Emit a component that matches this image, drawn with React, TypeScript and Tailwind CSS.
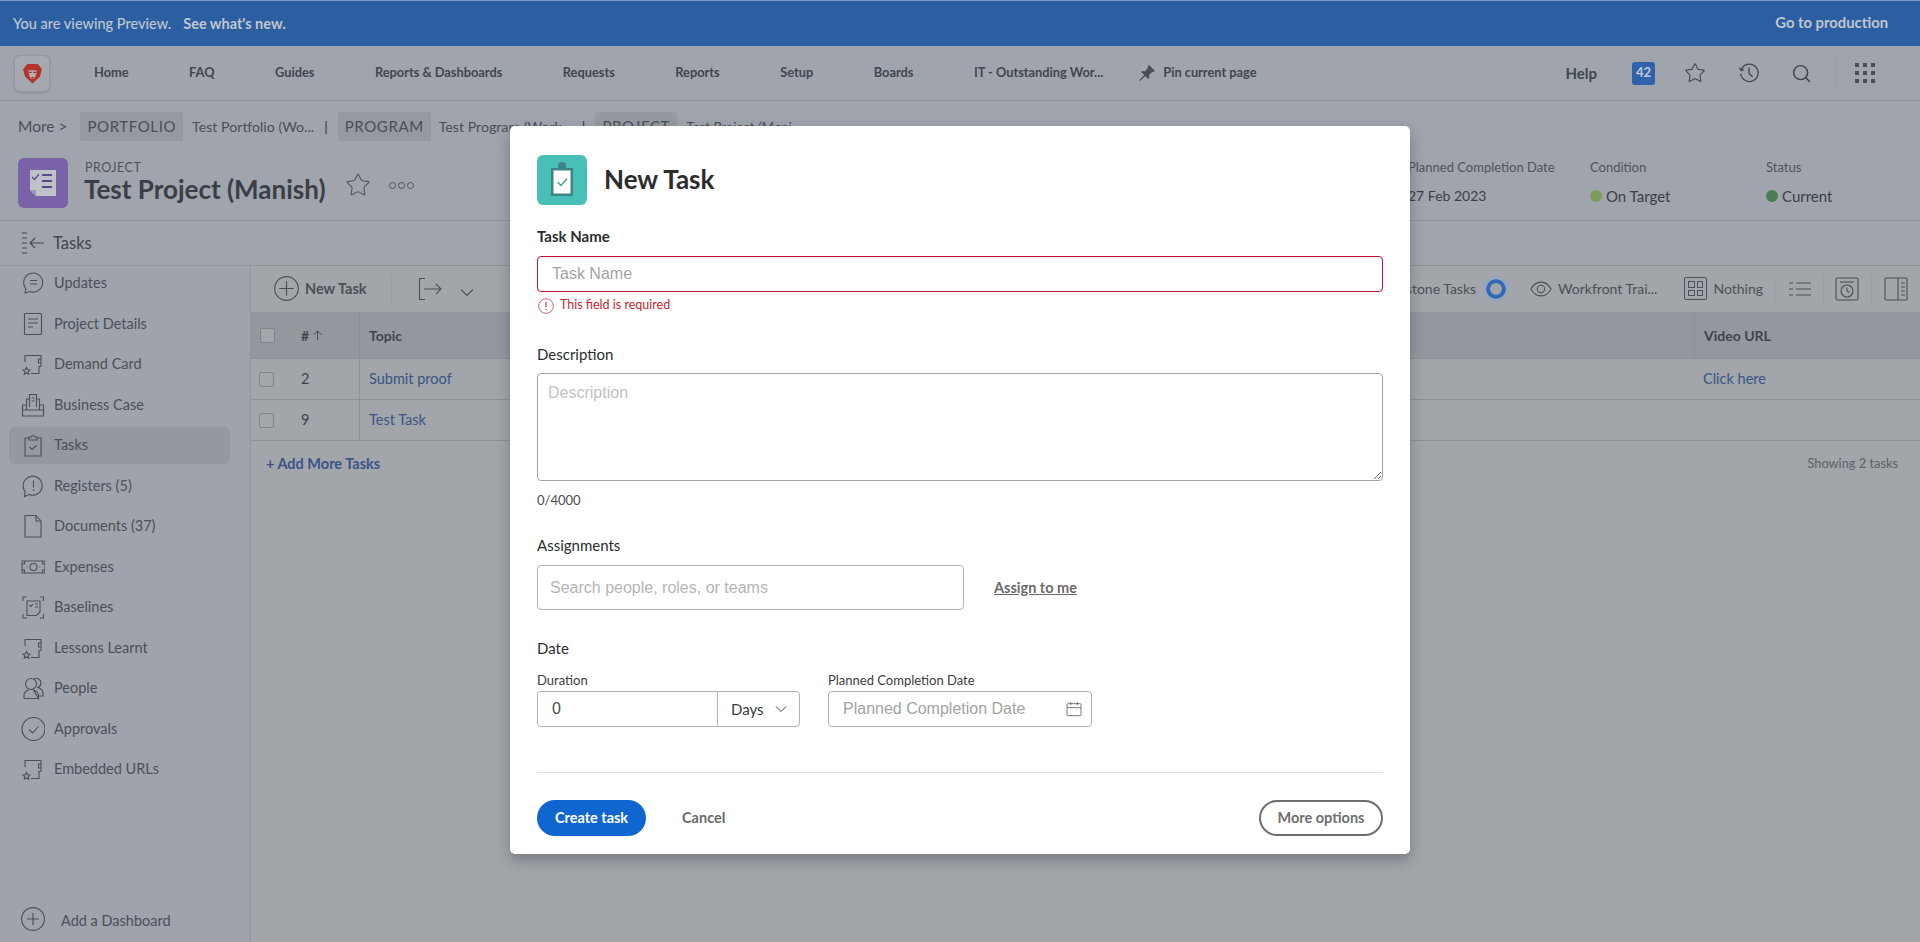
import React from 'react';
import { Search, Star } from 'lucide-react';

const font = 'font-["Lato","Open_Sans",sans-serif]';

function Ico({ className = 'w-6 h-6', children }: { className?: string; children: React.ReactNode }) {
  return (
    <svg viewBox="0 0 24 24" fill="none" stroke="currentColor" strokeWidth="1.1" className={className}>
      {children}
    </svg>
  );
}

const NoteStar = () => (
  <Ico>
    <path d="M4 10V3.500h16v11M20 7h-2.500v4H20M20 14.500h-2v7h-8" />
    <path d="M5.500 15.500l1.100 2.300 2.400.3-1.800 1.600.5 2.400-2.200-1.200-2.200 1.200.5-2.400L2 18.100l2.400-.3z" />
  </Ico>
);

const sideItems: { label: string; icon: React.ReactNode }[] = [
  {
    label: 'Updates',
    icon: (
      <Ico>
        <path d="M4 22l.8-4.500A9.500 9.500 0 1 1 9 20.500z" />
        <path d="M9 9.500h7M9 13h7" />
      </Ico>
    ),
  },
  {
    label: 'Project Details',
    icon: (
      <Ico>
        <rect x="3.500" y="1.500" width="17" height="21" rx="1" />
        <path d="M7 7h10M7 11h10M7 15h5" />
      </Ico>
    ),
  },
  { label: 'Demand Card', icon: <NoteStar /> },
  {
    label: 'Business Case',
    icon: (
      <Ico>
        <path d="M1.500 12h4v5h13v-5h4v11h-21zM1.500 17h21" />
        <path d="M5.500 12V6h3M18.500 12V6h-3M8.500 14V1.500h7V14M10.500 5h3M10.500 8h3" />
      </Ico>
    ),
  },
  {
    label: 'Tasks',
    icon: (
      <Ico>
        <path d="M8 5H4v18h16V5h-4M8 7V4h2.500a1.500 1.500 0 0 1 3 0H16v3z" />
        <path d="M8.500 14l2.500 2.500 4.500-4" />
      </Ico>
    ),
  },
  {
    label: 'Registers (5)',
    icon: (
      <Ico>
        <path d="M3.500 22.500l.6-5A9.500 9.500 0 1 1 8 20.500z" />
        <path d="M12.500 6.500v7M12.500 15.500v1.500" />
      </Ico>
    ),
  },
  {
    label: 'Documents (37)',
    icon: (
      <Ico>
        <path d="M4 1.500h11l5 5.500v16H4z" />
        <path d="M15 1.500V7h5" />
      </Ico>
    ),
  },
  {
    label: 'Expenses',
    icon: (
      <Ico>
        <rect x="1" y="6" width="23" height="12" rx="0.5" />
        <circle cx="12.500" cy="12" r="3.500" />
        <path d="M1 9h2.500V6M24 9h-2.500V6M1 15h2.500v3M24 15h-2.500v3M5.500 12h1M18.500 12h1" />
      </Ico>
    ),
  },
  {
    label: 'Baselines',
    icon: (
      <Ico>
        <path d="M2 6V2h3.500M19 2h3.500v4M2 19v4h4M19 23h3.500v-4" />
        <path d="M6 6h13v11l-3.500 3.500H6z" />
        <path d="M8.500 10l1.500 1.500 2-2.500M14 9h3M14 12h3" />
      </Ico>
    ),
  },
  { label: 'Lessons Learnt', icon: <NoteStar /> },
  {
    label: 'People',
    icon: (
      <Ico>
        <circle cx="10" cy="8" r="5.500" />
        <path d="M3 22.500v-3c0-3 2-4.500 4.500-5.500M12.500 14c3 1 5 2.500 5 5.500v3zM3 22.500h14.500" />
        <path d="M13 2.700A5 5 0 0 1 20 7a5 5 0 0 1-3 4.500c3 1 5 3 5 6v2.500h-4" />
      </Ico>
    ),
  },
  {
    label: 'Approvals',
    icon: (
      <Ico>
        <circle cx="12.500" cy="12" r="11.500" />
        <path d="M8 12.500l3.500 3.500 6-6.500" />
      </Ico>
    ),
  },
  { label: 'Embedded URLs', icon: <NoteStar /> },
];

const navItems = ['Home', 'FAQ', 'Guides', 'Reports & Dashboards', 'Requests', 'Reports', 'Setup', 'Boards', 'IT - Outstanding Wor...'];

function Banner() {
  return (
    <div className="h-[46px] shrink-0 bg-[#2c5fa2] border-t border-[#7d9cc4] flex items-center justify-between pl-[13px] pr-[32px] text-[14.500px] text-[#c0c6cf]">
      <div className="flex gap-[12px] font-medium">
        <span>You are viewing Preview.</span>
        <span className="font-bold">See what's new.</span>
      </div>
      <span className="font-bold text-[14.800px] -mt-0.5">Go to production</span>
    </div>
  );
}

function TopNav() {
  return (
    <div className="h-[55px] shrink-0 border-b border-[#8f939a] flex items-center pl-[14px] pr-[45px] text-[#41464e]">
      <div className="w-[36px] h-[37px] rounded-md bg-[#a5a8af] border border-[#94979e] shadow-sm flex items-center justify-center mr-[44px]">
        <svg viewBox="0 0 20 20" className="w-[21px] h-[21px]">
          <path d="M5 1h10l4 5-2 7-7 6.500L3 13 1 6z" fill="#b3332c" />
          <path d="M6 7h8l-.8 5-1.700 3h-3L6.800 12z" fill="#b9a9ab" />
          <path d="M7 9h2M11 9h2M9 14h2" stroke="#7d2a27" strokeWidth="1.200" />
        </svg>
      </div>
      <div className="flex items-center gap-[60.500px] text-[12.800px] font-bold">
        {navItems.map((n) => (
          <span key={n}>{n}</span>
        ))}
      </div>
      <div className="flex items-center gap-[6px] ml-[34px] text-[12.800px] font-bold">
        <svg viewBox="0 0 20 20" className="w-[20px] h-[20px]" fill="#4a4f57">
          <path d="M12 2l6 6-1.500 1-1-.3-3.500 3.300.3 3-1 1-3-3-5.300 5-.8-.8 5-5.300-3-3 1-1 3 .3L11 4.500l-.3-1z" />
        </svg>
        <span>Pin current page</span>
      </div>
      <div className="ml-auto flex items-center">
        <span className="text-[15px] font-bold mr-[35px]">Help</span>
        <span className="w-[23px] h-[23px] rounded-[3px] bg-[#2f62ab] text-[#c3cad6] text-[13px] font-bold flex items-center justify-center mr-[29px]">42</span>
        <Star className="w-[22px] h-[22px] mr-[32px]" strokeWidth={1.200} />
        <Ico className="w-[22px] h-[22px] mr-[31px]">
          <path d="M3.500 8.500A9.500 9.500 0 1 1 3 13M1.500 6.500l2 3 3-1.500" strokeWidth="1.400" />
          <path d="M12 6v6.500l4 3.500" strokeWidth="1.400" />
        </Ico>
        <Search className="w-[21px] h-[21px] mr-[24px]" strokeWidth={1.700} />
        <div className="w-px h-[36px] bg-[#979ba2] mr-[18px]" />
        <div className="grid grid-cols-3 gap-[4px]">
          {Array.from({ length: 9 }).map((_, i) => (
            <span key={i} className="w-[4px] h-[4px] bg-[#4a4f57]" />
          ))}
        </div>
      </div>
    </div>
  );
}

function Chip({ children }: { children: React.ReactNode }) {
  return <span className="h-[29px] px-[7px] rounded-[2px] bg-[#96999f] text-[15px] tracking-[0.6px] flex items-center">{children}</span>;
}

function Breadcrumbs() {
  return (
    <div className="h-[50px] shrink-0 flex items-center pl-[18px] text-[14.200px] text-[#4a4f57] pt-[1px]">
      <span className="mr-[13px] text-[15.500px]">More &gt;</span>
      <Chip>PORTFOLIO</Chip>
      <span className="ml-[9px]">Test Portfolio (Wo...</span>
      <span className="mx-[10px] text-[#2e3238]">|</span>
      <Chip>PROGRAM</Chip>
      <span className="ml-[8px]">Test Program (Work...</span>
      <span className="mx-[10px] text-[#2e3238]">|</span>
      <Chip>PROJECT</Chip>
      <span className="ml-[9px] italic">Test Project (Mani...</span>
    </div>
  );
}

function Stat({ label, children, className }: { label: string; children: React.ReactNode; className: string }) {
  return (
    <div className={className}>
      <div className="text-[13px] leading-[18px] text-[#4f545c] mb-[10px]">{label}</div>
      <div className="text-[15px] leading-[20px] text-[#3a3f47] flex items-center gap-[4px]">{children}</div>
    </div>
  );
}

function ProjectHeader() {
  return (
    <div className="h-[70px] shrink-0 border-b border-[#8f939a] flex items-start pl-[18px] text-[#3a3f47]">
      <div className="w-[50px] h-[50px] mt-[7px] rounded-md bg-[#7a62a8] flex items-center justify-center">
        <svg viewBox="0 0 26 26" className="w-[26px] h-[26px]">
          <path d="M0 0h26v26H6l-6-6z" fill="#bfc1c9" />
          <path d="M0 20h6v6z" fill="#9e97b5" />
          <path d="M2 7l2.500 2.500L9 4" fill="none" stroke="#5c4a86" strokeWidth="1.200" />
          <path d="M12 5h10M12 11h10M12 17h10" stroke="#5c4a86" strokeWidth="2.200" />
        </svg>
      </div>
      <div className="ml-[17px] mt-[9px]">
        <div className="text-[12.500px] leading-[15px] tracking-[0.5px] text-[#4f545c]">PROJECT</div>
        <div className="text-[26px] leading-[34px] font-bold -ml-px -mt-[3px]">Test Project (Manish)</div>
      </div>
      <Star className="w-[26px] h-[26px] ml-[19px] mt-[21px] text-[#4f545c]" strokeWidth={1} />
      <div className="flex gap-[2px] ml-[18px] mt-[31px]">
        {[0, 1, 2].map((i) => (
          <span key={i} className="w-[7px] h-[7px] rounded-full border border-[#4f545c]" />
        ))}
      </div>
      <div className="ml-auto flex mt-[7px]">
        <Stat label="Planned Completion Date" className="w-[182px]">
          <span className="text-[14px]">27 Feb 2023</span>
        </Stat>
        <Stat label="Condition" className="w-[176px]">
          <span className="w-[12px] h-[12px] rounded-full bg-[#7b9c5c]" /> On Target
        </Stat>
        <Stat label="Status" className="w-[154px]">
          <span className="w-[12px] h-[12px] rounded-full bg-[#487d55]" /> Current
        </Stat>
      </div>
    </div>
  );
}

function Sidebar() {
  return (
    <aside className="w-[251px] shrink-0 border-r border-[#92969d] bg-[#9fa3ac] flex flex-col text-[#4b5058] relative">
      <div className="flex-1 pl-[9px] pr-[20px] -mt-[3px]">
        {sideItems.map((it) => (
          <div key={it.label} className="h-[40.500px] py-[2px]">
            <div className={`h-full flex items-center rounded-md pl-[12px] text-[14.500px] ${it.label === 'Tasks' ? 'bg-[#94989f]' : ''}`}>
              <span className="w-[33px] shrink-0 text-[#4b5058]">{it.icon}</span>
              <span>{it.label}</span>
            </div>
          </div>
        ))}
      </div>
      <div className="flex items-center pl-[21px] pb-[10px] text-[14.500px]">
        <Ico className="w-[24px] h-[24px] mr-[16px]">
          <circle cx="12" cy="12" r="11.400" />
          <path d="M12 6v12M6 12h12" />
        </Ico>
        <span className="mt-[4px]">Add a Dashboard</span>
      </div>
    </aside>
  );
}

function Toolbar() {
  return (
    <div className="h-[47px] shrink-0 flex items-center pl-[23px] pr-[12px] text-[#4b5058] text-[14px] -mt-px">
      <Ico className="w-[25px] h-[25px] mr-[6px]">
        <circle cx="12" cy="12" r="11.400" />
        <path d="M12 5v14M5 12h14" />
      </Ico>
      <span className="font-bold text-[14.500px]">New Task</span>
      <div className="w-px h-[28px] bg-[#979ba2] ml-[24px] mr-[25px]" />
      <Ico className="w-[26px] h-[24px]">
        <path d="M7 1.500H1.500v21H7M6 12h17M18 7l5 5-5 5" />
      </Ico>
      <Ico className="w-[14px] h-[14px] ml-[17px] mt-[6px]">
        <path d="M2 8l10 10L22 8" strokeWidth="2" />
      </Ico>
      <div className="ml-auto flex items-center">
        <span className="mr-[10px]">Milestone Tasks</span>
        <span className="w-[20px] h-[20px] rounded-full border-[4px] border-[#3069b5] outline-[3px] outline-[#97a6bd] mr-[24px] box-border" />
        <Ico className="w-[22px] h-[22px] mr-[6px]">
          <path d="M1 12C4 6.500 8 4.500 12 4.500S20 6.500 23 12c-3 5.500-7 7.500-11 7.500S4 17.500 1 12z" />
          <circle cx="12" cy="12" r="4" />
        </Ico>
        <span>Workfront Trai...</span>
        <div className="w-[23px] h-[23px] border border-[#4b5058] rounded-[2px] grid grid-cols-2 gap-[2px] p-[3px] ml-[27px] mr-[6px]">
          {[0, 1, 2, 3].map((i) => (
            <span key={i} className="border border-[#4b5058]" />
          ))}
        </div>
        <span>Nothing</span>
        <div className="w-px h-[28px] bg-[#979ba2] ml-[11px] mr-[13px]" />
        <Ico className="w-[24px] h-[24px]">
          <path d="M1 6h4M8 6h15M1 12h4M8 12h15M1 18h4M8 18h15" />
        </Ico>
        <div className="w-px h-[28px] bg-[#979ba2] mx-[11px]" />
        <Ico className="w-[24px] h-[24px]">
          <rect x="1" y="1" width="22" height="22" rx="1.500" />
          <path d="M5 5h14" />
          <circle cx="12" cy="14" r="6" />
          <path d="M12 10.500V14l2.500 1.500" />
        </Ico>
        <div className="w-px h-[28px] bg-[#979ba2] mx-[12px]" />
        <Ico className="w-[24px] h-[24px]">
          <rect x="1" y="1" width="22" height="22" rx="1" />
          <path d="M14 1v22M17 6h4M17 10h4M17 14h4M17 18h4" />
        </Ico>
      </div>
    </div>
  );
}

function Box() {
  return <span className="w-[15px] h-[15px] rounded-[2px] border border-[#80848b] bg-[#a3a6ab] block" />;
}

function Row({ num, title, url }: { num: string; title: string; url?: string }) {
  return (
    <div className="h-[41px] border-b border-[#8d9197] flex items-center text-[14.500px]">
      <span className="w-[50px] pl-[8px]"><Box /></span>
      <span className="w-[58px] text-[#3f444c]">{num}</span>
      <span className="h-full w-px bg-[#8d9197]" />
      <span className="ml-[9px] text-[#3a5488]">{title}</span>
      {url && <span className="ml-auto w-[226px] pl-[9px] text-[#3a5488]">{url}</span>}
      {!url && <span className="ml-auto w-[226px]" />}
    </div>
  );
}

function TaskTable() {
  return (
    <main className="flex-1 bg-[#a2a5a9] flex flex-col min-w-0">
      <Toolbar />
      <div className="h-[47px] shrink-0 bg-[#94989e] border-b border-[#8d9197] flex items-center text-[14px] font-bold text-[#3f444c]">
        <span className="w-[50px] pl-[9px]"><Box /></span>
        <span className="w-[58px] flex items-center gap-[3px]">
          # <svg viewBox="0 0 12 12" className="w-[11px] h-[11px]" fill="none" stroke="currentColor"><path d="M6 11V1M1.500 5.500L6 1l4.500 4.500" /></svg>
        </span>
        <span className="h-full w-px bg-[#8d9197]" />
        <span className="ml-[9px]">Topic</span>
        <span className="ml-auto w-[226px] h-full flex items-center pl-[9px] border-l border-[#8d9197]">Video URL</span>
      </div>
      <Row num="2" title="Submit proof" url="Click here" />
      <Row num="9" title="Test Task" />
      <div className="h-[46px] flex items-center justify-between pl-[15px] pr-[22px]">
        <span className="text-[14.500px] font-bold text-[#3a5488]">+ Add More Tasks</span>
        <span className="text-[12.800px] text-[#5d6168]">Showing 2 tasks</span>
      </div>
    </main>
  );
}

function Label({ children, className = '' }: { children: React.ReactNode; className?: string }) {
  return <div className={`text-[15px] leading-[20px] text-[#2c2c2c] ${className}`}>{children}</div>;
}

const inputCls = 'font-["Liberation_Sans",Arial,sans-serif] text-[16px] text-[#4b4b4b] outline-none bg-white';

function NewTaskModal() {
  return (
    <div className="absolute left-[510px] top-[126px] w-[900px] h-[728px] bg-white rounded-[5px] shadow-[0_6px_14px_rgba(40,45,60,0.35)] px-[27px] pt-[29px]">
      <div className="flex items-center h-[50px]">
        <div className="w-[50px] h-[50px] rounded-md bg-[#48c0b8] flex items-center justify-center">
          <svg viewBox="0 0 24 36" className="w-[24px] h-[36px]">
            <path d="M1 6h22v28H1z" fill="#3f8584" />
            <path d="M8 6V4a4 4 0 0 1 8 0v2h2v3H6V6z" fill="#3f8584" />
            <path d="M3.500 8.500h17v23h-17z" fill="#fff" />
            <path d="M7.500 20l3.500 3.500 6-7" fill="none" stroke="#3f9e9a" strokeWidth="1.300" />
          </svg>
        </div>
        <h1 className="ml-[17px] text-[26px] font-bold text-[#2c2c2c] -mt-[2px]">New Task</h1>
      </div>

      <Label className="mt-[21px] font-bold text-[#1f1f1f] text-[14.500px]">Task Name</Label>
      <input placeholder="Task Name" className={`mt-[10px] w-full h-[36px] rounded-[4px] border border-[#c0122a] px-[14px] placeholder:text-[#a3a3a3] ${inputCls}`} />
      <div className="mt-[5px] h-[17px] flex items-center gap-[6px] text-[12.500px] text-[#c9252d] pl-px">
        <Ico className="w-[16px] h-[16px]">
          <circle cx="12" cy="12" r="11" />
          <path d="M12 6v8M12 16.500v2" strokeWidth="1.600" />
        </Ico>
        <span>This field is required</span>
      </div>

      <Label className="mt-[30px]">Description</Label>
      <textarea placeholder="Description" className={`block mt-[9px] w-full h-[108px] rounded-[4px] border border-[#a5a5a5] px-[10px] py-[7px] placeholder:text-[#c2c2c2] ${inputCls}`} />
      <div className="mt-[11px] text-[13px] leading-[16px] text-[#4b4b4b]">0/4000</div>

      <Label className="mt-[27px]">Assignments</Label>
      <div className="mt-[10px] flex items-center">
        <input placeholder="Search people, roles, or teams" className={`w-[427px] h-[45px] rounded-[4px] border border-[#b3b3b3] px-[12px] placeholder:text-[#b5b5b5] ${inputCls}`} />
        <span className="ml-[30px] text-[14.500px] font-bold text-[#6a6a6a] underline">Assign to me</span>
      </div>

      <Label className="mt-[28px]">Date</Label>
      <div className="mt-[14px] flex gap-[28px]">
        <div>
          <div className="text-[13px] leading-[16px] text-[#3c3c3c] mb-[3px]">Duration</div>
          <div className="flex h-[36px] w-[263px] border border-[#b3b3b3] rounded-[4px]">
            <input readOnly value="0" className={`w-[179px] px-[14px] rounded-l-[4px] ${inputCls}`} />
            <div className="flex-1 border-l border-[#b3b3b3] flex items-center pl-[13px] text-[15px] text-[#3c3c3c]">
              Days
              <Ico className="w-[12px] h-[12px] ml-[11px] text-[#3c3c3c]">
                <path d="M2 7l10 10L22 7" strokeWidth="2" />
              </Ico>
            </div>
          </div>
        </div>
        <div>
          <div className="text-[13px] leading-[16px] text-[#3c3c3c] mb-[3px]">Planned Completion Date</div>
          <div className="flex items-center h-[36px] w-[264px] border border-[#b3b3b3] rounded-[4px] pr-[9px]">
            <input placeholder="Planned Completion Date" className={`flex-1 min-w-0 px-[14px] placeholder:text-[#a3a3a3] ${inputCls}`} />
            <Ico className="w-[16px] h-[16px] text-[#4b4b4b]">
              <rect x="1.500" y="4" width="21" height="18" rx="1.500" />
              <path d="M1.500 10h21M7 1.500V6M17 1.500V6" />
            </Ico>
          </div>
        </div>
      </div>

      <div className="mt-[45px] h-px bg-[#e3e3e3]" />
      <div className="mt-[27px] flex items-center">
        <button className="w-[109px] h-[36px] rounded-full bg-[#0f66d0] text-white text-[14.500px] font-bold">Create task</button>
        <button className="ml-[36px] text-[14.500px] font-bold text-[#6a6a6a]">Cancel</button>
        <button className="ml-auto w-[124px] h-[36px] rounded-full border-2 border-[#6e6e6e] text-[14.500px] font-bold text-[#6e6e6e]">More options</button>
      </div>
    </div>
  );
}

export default function App() {
  return (
    <div className={`relative h-screen w-full overflow-hidden flex flex-col bg-[#a0a4ac] ${font}`}>
      <Banner />
      <TopNav />
      <Breadcrumbs />
      <ProjectHeader />
      <div className="h-[45px] shrink-0 border-b border-[#8f939a] flex items-center pl-[21px] text-[#41464e]">
        <Ico className="w-[24px] h-[24px] mr-[8px]">
          <path d="M1 2h5M1 7h5M1 12h5M1 17h5M1 22h5M23 12H9M14 7l-5 5 5 5" />
        </Ico>
        <span className="text-[16.500px]">Tasks</span>
      </div>
      <div className="flex flex-1 min-h-0">
        <Sidebar />
        <TaskTable />
      </div>
      <NewTaskModal />
    </div>
  );
}
